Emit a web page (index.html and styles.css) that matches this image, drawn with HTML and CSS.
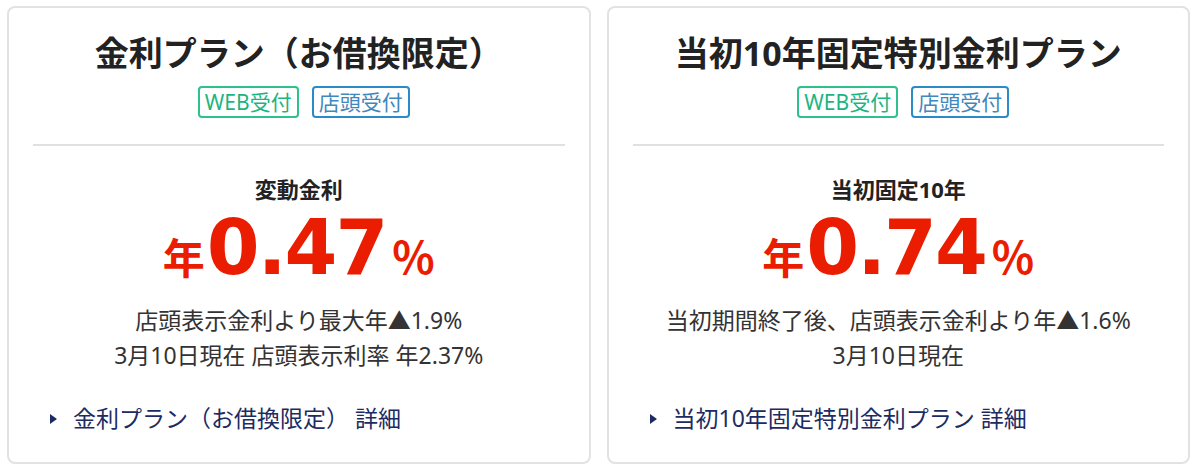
FILE: index.html
```html
<!DOCTYPE html>
<html>
<head>
  <meta charset="utf-8">
  <title>金利プラン</title>
  <link rel="stylesheet" href="styles.css">
</head>
<body>
  <div class="plans">
    <div class="plan">
      <h2 class="plan-title">金利プラン（お借換限定）</h2>
      <div class="tags">
        <span class="tag tag-web">WEB受付</span>
        <span class="tag tag-shop">店頭受付</span>
      </div>
      <hr class="divider">
      <p class="rate-label">変動金利</p>
      <p class="rate"><span class="rate-pre">年</span><span class="rate-num">0.47</span><span class="rate-unit">%</span></p>
      <div class="note">
        <p>店頭表示金利より最大年▲1.9%</p>
        <p>3月10日現在 店頭表示利率 年2.37%</p>
      </div>
      <a class="more" href="#">金利プラン（お借換限定） 詳細</a>
    </div>

    <div class="plan">
      <h2 class="plan-title">当初10年固定特別金利プラン</h2>
      <div class="tags">
        <span class="tag tag-web">WEB受付</span>
        <span class="tag tag-shop">店頭受付</span>
      </div>
      <hr class="divider">
      <p class="rate-label">当初固定10年</p>
      <p class="rate"><span class="rate-pre">年</span><span class="rate-num">0.74</span><span class="rate-unit">%</span></p>
      <div class="note">
        <p>当初期間終了後、店頭表示金利より年▲1.6%</p>
        <p>3月10日現在</p>
      </div>
      <a class="more" href="#">当初10年固定特別金利プラン 詳細</a>
    </div>
  </div>
</body>
</html>
```

FILE: styles.css
```css
html {
  font-family: 'Noto Sans', 'Noto Sans CJK JP', sans-serif;
}

body {
  margin: 0;
  background: #fff;
  color: #333;
}

p {
  margin: 0;
}

.plans {
  display: flex;
  gap: 16px;
  padding: 6px 10px 0 7px;
}

.plan {
  flex: 1;
  border: 2px solid #e2e2e2;
  border-radius: 8px;
  padding: 23px 24px 26px;
  text-align: center;
}

.plan-title {
  margin: 0;
  font-size: 34px;
  line-height: 44px;
  font-weight: bold;
  color: #222;
}

.tags {
  display: flex;
  justify-content: center;
  gap: 13px;
  margin-top: 11px;
  padding-left: 10px;
}

.tag {
  display: inline-block;
  padding: 0 5px;
  border: 2px solid;
  border-radius: 4px;
  font-size: 21px;
  line-height: 28px;
}

.tag-web {
  border-color: #2cc18d;
  color: #1db57f;
}

.tag-shop {
  border-color: #2b8bc6;
  color: #3f88bd;
}

.divider {
  margin: 26px 0 0;
  border: 0;
  border-top: 2px solid #e0e0e0;
}

.rate-label {
  margin-top: 28px;
  font-size: 22px;
  line-height: 30px;
  font-weight: bold;
  color: #222;
}

.rate {
  display: flex;
  justify-content: center;
  align-items: baseline;
  margin-top: 6px;
  line-height: 1;
  color: #ea1d00;
  font-weight: bold;
}

.rate-pre {
  font-family: 'Noto Sans CJK JP', sans-serif;
  font-size: 42px;
}

.rate-num {
  font-family: 'DejaVu Sans', sans-serif;
  font-size: 76px;
  letter-spacing: -2px;
  margin: 0 6px 0 2px;
}

.rate-unit {
  font-family: 'Noto Sans CJK JP', sans-serif;
  font-size: 44px;
}

.note {
  margin-top: 17px;
  font-size: 23px;
  line-height: 35px;
  color: #333;
}

.more {
  display: flex;
  align-items: center;
  margin-top: 28px;
  padding-left: 17px;
  font-size: 23px;
  line-height: 35px;
  color: #1c2c62;
  text-decoration: none;
  text-align: left;
}

.more::before {
  content: "";
  width: 0;
  height: 0;
  margin-right: 16px;
  border-left: 7px solid #1c2c62;
  border-top: 5px solid transparent;
  border-bottom: 5px solid transparent;
}
```
